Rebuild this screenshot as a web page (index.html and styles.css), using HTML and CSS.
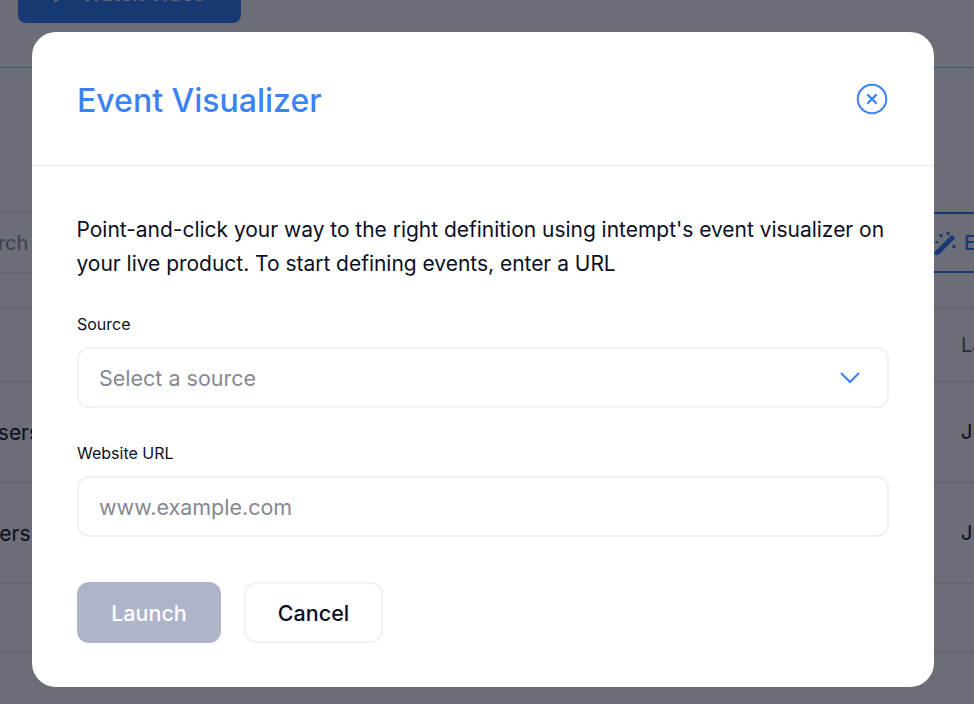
FILE: index.html
```html
<!DOCTYPE html>
<html lang="en">
<head>
  <meta charset="UTF-8">
  <meta name="viewport" content="width=device-width, initial-scale=1.0">
  <title>Event Visualizer</title>
  <link rel="stylesheet" href="styles.css">
</head>
<body>
  <!-- Page behind the modal -->
  <div class="page">
    <header class="top-bar">
      <button class="watch-btn">
        <svg class="watch-icon" viewBox="0 0 16 16" width="16" height="16"><path d="M1.5 1.5v13l11-6.5z" fill="#fff"/></svg>
        Watch video
      </button>
    </header>

    <div class="toolbar">
      <div class="search">Search</div>
      <button class="event-btn">
        <svg viewBox="0 0 24 24" width="24" height="24" fill="none" stroke="#2d7ffa">
          <path d="M3 22L18 7" stroke-width="5" stroke-linecap="round"/>
          <path d="M7 3v3M14 1v3M3 10v2M20 14v3" stroke-width="3"/>
        </svg>
        Event
      </button>
    </div>

    <div class="table-head">
      <span></span>
      <span class="col-date muted">Last seen</span>
    </div>
    <div class="table-row">
      <span class="col-name first">Power users</span>
      <span class="col-date">Jun 12</span>
    </div>
    <div class="table-row">
      <span class="col-name second">New users</span>
      <span class="col-date">Jun 10</span>
    </div>
    <div class="table-row short"></div>
  </div>

  <div class="overlay"></div>

  <div class="modal">
    <div class="modal-header">
      <h2 class="modal-title">Event Visualizer</h2>
      <button class="close-btn" aria-label="Close">
        <svg viewBox="0 0 32 32" width="32" height="32" fill="none" stroke="#3b82f6">
          <circle cx="16" cy="16" r="14.25" stroke-width="2"/>
          <path d="M12 12l8 8M20 12l-8 8" stroke-width="2.4" stroke-linecap="round"/>
        </svg>
      </button>
    </div>

    <div class="modal-body">
      <p class="intro">Point-and-click your way to the right definition using intempt's event visualizer on your live product. To start defining events, enter a URL</p>

      <label class="field-label">Source</label>
      <div class="field field-select">
        <span class="placeholder">Select a source</span>
        <svg viewBox="0 0 20 12" width="20" height="12" fill="none" stroke="#3b82f6" stroke-width="2" stroke-linecap="round"><path d="M1.5 1.5L10 10l8.5-8.5"/></svg>
      </div>

      <label class="field-label second-label">Website URL</label>
      <div class="field">
        <span class="placeholder">www.example.com</span>
      </div>

      <div class="actions">
        <button class="btn btn-launch">Launch</button>
        <button class="btn btn-cancel">Cancel</button>
      </div>
    </div>
  </div>
</body>
</html>
```

FILE: styles.css
```css
html, body {
  margin: 0;
  padding: 0;
  height: 100%;
  overflow: hidden;
}
body {
  font-family: Inter, "Noto Sans", sans-serif;
  background-color: #fff;
  color: #0b1025;
}
button {
  font-family: inherit;
}

/* page behind */
.page {
  height: 704px;
  overflow: hidden;
}
.top-bar {
  display: flow-root;
  height: 67px;
  border-bottom: 1px solid #8ac0ff;
}
.watch-btn {
  display: flex;
  align-items: center;
  justify-content: center;
  gap: 12px;
  width: 223px;
  height: 48px;
  margin: -25px 0 0 18px;
  padding: 0 0 12px;
  background-color: #2d7ffa;
  border: none;
  border-radius: 8px;
  color: #fff;
  font-size: 21px;
  font-weight: 500;
}
.watch-icon {
  margin-top: 5px;
}
.toolbar {
  display: flex;
  justify-content: space-between;
  box-sizing: border-box;
  height: 61px;
  margin-top: 144px;
  border-top: 1px solid #e3e5ec;
  border-bottom: 1px solid #e3e5ec;
}
.search {
  margin-left: -38px;
  font-size: 20px;
  line-height: 60px;
  color: #8a8d99;
}
.event-btn {
  display: flex;
  align-items: center;
  gap: 6px;
  width: 160px;
  margin: -1px -110px -1px 0;
  padding: 0;
  background: none;
  border: 2px solid #2d7ffa;
  border-right: none;
  color: #2d7ffa;
  font-size: 20px;
  font-weight: 500;
}
.event-btn svg {
  margin-left: 8px;
}
.table-head {
  display: flex;
  justify-content: space-between;
  align-items: center;
  box-sizing: border-box;
  height: 75px;
  margin-top: 34px;
  border-top: 1px solid #e3e5ec;
  border-bottom: 1px solid #e3e5ec;
}
.table-row {
  display: flex;
  justify-content: space-between;
  align-items: center;
  box-sizing: border-box;
  height: 101px;
  border-bottom: 1px solid #e3e5ec;
  font-size: 21px;
}
.table-row.short {
  height: 68px;
}
.col-date {
  width: 13px;
  white-space: nowrap;
  font-size: 20px;
}
.muted {
  color: #5b6072;
}
.col-name {
  white-space: nowrap;
}
.col-name.first {
  margin-left: -83px;
}
.col-name.second {
  margin-left: -75px;
}

.overlay {
  position: fixed;
  inset: 0;
  background-color: rgba(8, 12, 28, 0.6);
}

/* modal */
.modal {
  position: fixed;
  left: 32px;
  top: 32px;
  width: 902px;
  height: 655px;
  background-color: #fff;
  border-radius: 24px;
}
.modal-header {
  display: flex;
  justify-content: space-between;
  align-items: center;
  height: 133px;
  padding: 0 46px 0 45px;
  border-bottom: 1px solid #e8e9ee;
}
.modal-title {
  margin: 4px 0 0;
  font-size: 32px;
  font-weight: 500;
  color: #3b82f6;
}
.close-btn {
  display: flex;
  padding: 0;
  background: none;
  border: none;
}
.modal-body {
  padding: 47px 45px 0;
}
.intro {
  margin: 0 0 0 -0.5px;
  font-size: 21px;
  line-height: 34px;
  letter-spacing: -0.025px;
}
.field-label {
  display: block;
  margin-top: 33px;
  font-size: 16px;
  line-height: 20px;
}
.second-label {
  margin-top: 35px;
}
.field {
  display: flex;
  justify-content: space-between;
  align-items: center;
  box-sizing: border-box;
  height: 61px;
  margin-top: 13px;
  padding: 0 27px 0 20px;
  border: 2px solid #f0f1f4;
  border-radius: 12px;
}
.placeholder {
  font-size: 21.5px;
  color: #868892;
}
.actions {
  display: flex;
  gap: 23px;
  margin-top: 45px;
}
.btn {
  height: 61px;
  padding: 0;
  border-radius: 12px;
  font-size: 21.5px;
  font-weight: 500;
}
.btn-launch {
  width: 144px;
  background-color: #aeb4c9;
  border: none;
  color: #fff;
}
.btn-cancel {
  width: 139px;
  background-color: #fff;
  border: 2px solid #f0f1f4;
  color: #0b1025;
}
```
